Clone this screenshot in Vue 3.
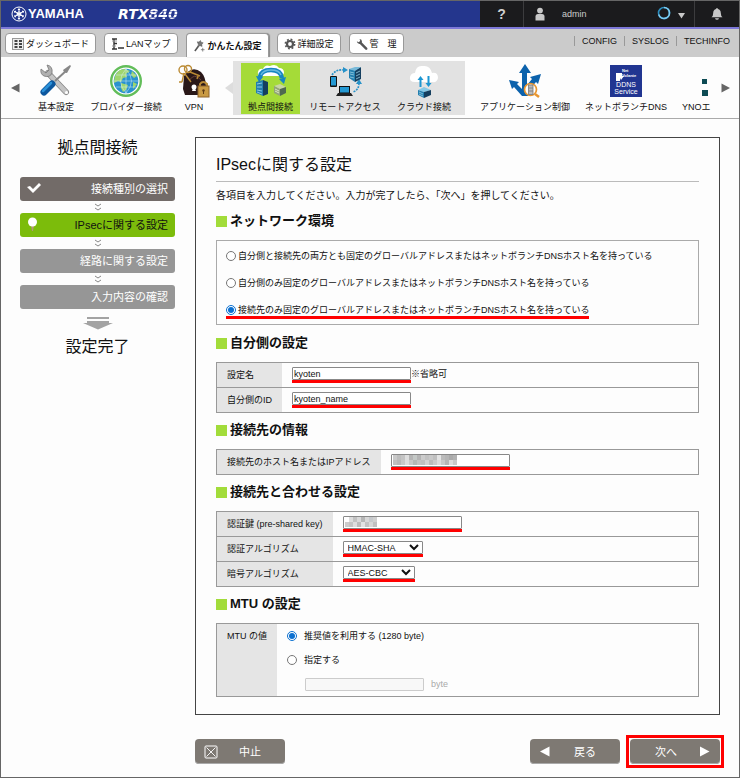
<template>
  <div class="page">
    <header>
      <div class="topbar">
        <a href="#" class="brand">
          <svg class="brand-mark" viewBox="0 0 16 16" aria-hidden="true">
            <circle cx="8" cy="8" r="7" fill="none" stroke="#fff" stroke-width="1" />
            <g stroke="#fff" stroke-width="1" fill="none">
              <path v-for="a in [0, 60, 120, 180, 240, 300]" :key="a" :transform="`rotate(${a} 8 8)`" d="M8 8V2.2M6.9 3.5H9.1M7 6.1L9 6.1" />
            </g>
          </svg>
          <span class="brand-name">YAMAHA</span>
        </a>
        <span class="model">RTX<span class="model-num">840</span></span>
        <div class="account">
          <button type="button" class="help" aria-label="ヘルプ">?</button>
          <div class="user">
            <svg class="user-icon" viewBox="0 0 12 14" aria-hidden="true">
              <circle cx="6" cy="3.6" r="2.9" fill="#c8c8c8" />
              <path d="M1.5 13.5V9.5Q1.5 7 4 7H8Q10.500 7 10.500 9.500V13.500Z" fill="#c8c8c8" />
            </svg>
            <span>admin</span>
            <button type="button" class="user-menu" aria-label="メニュー">
              <svg viewBox="0 0 30 14" aria-hidden="true">
                <circle cx="8" cy="6" r="5.500" fill="none" stroke="#2d8fc0" stroke-width="1.600" />
                <path d="M8 .5A5.500 5.500 0 1 1 2.700 7.500" fill="none" stroke="#7ecbf0" stroke-width="1.600" />
                <path d="M22 6H29L25.500 11.500Z" fill="#c8c8c8" />
              </svg>
            </button>
          </div>
          <button type="button" class="bell" aria-label="通知">
            <svg viewBox="0 0 12 14" aria-hidden="true">
              <path d="M6 1Q6.800 1 6.900 2Q9.800 2.800 9.800 6Q9.800 9 11.500 10.300H.5Q2.200 9 2.200 6Q2.200 2.800 5.100 2Q5.200 1 6 1Z" fill="#c8c8c8" />
              <path d="M4 11.200H8Q7.600 12.800 6 12.800T4 11.200Z" fill="#c8c8c8" />
            </svg>
          </button>
        </div>
      </div>

      <div class="tabbar">
        <nav class="tabs">
          <a v-for="t in tabs" :key="t.id" href="#" class="tab" :class="{ active: t.active }">
            <svg v-if="t.id === 'dash'" viewBox="0 0 12 12" aria-hidden="true">
              <rect x=".5" y=".5" width="11" height="11" fill="#eee" stroke="#999" />
              <path d="M2.500 3H5.500M2.500 6H5.500M2.500 9H5.500M7 3H10M7 6H10M7 9H10" stroke="#444" stroke-width="2" />
            </svg>
            <svg v-else-if="t.id === 'lan'" class="wide" viewBox="0 0 13 12" aria-hidden="true">
              <path d="M1 1H6M3 1V11M3 5.500H6M1 11H6M7 10H13" stroke="#333" stroke-width="1.400" fill="none" />
              <path d="M1 3H6M1 8H5" stroke="#999" />
            </svg>
            <svg v-else-if="t.id === 'easy'" class="wide" viewBox="0 0 13 13" aria-hidden="true">
              <path d="M1.500 12L5.500 6.500" stroke="#555" stroke-width="1.700" />
              <path d="M4 2L6 2.200L7.500 .5L8.300 2.500L10.500 3L9 4.800L9.300 7L7.200 6.200L5 7L5.200 4.600Z" fill="#777" stroke="#555" stroke-width=".5" />
              <path d="M10 8.500V12.500M8 10.500H12" stroke="#666" stroke-width=".8" />
            </svg>
            <svg v-else-if="t.id === 'detail'" viewBox="0 0 12 12" aria-hidden="true">
              <circle cx="6" cy="6" r="3" fill="none" stroke="#555" stroke-width="2.200" />
              <circle cx="6" cy="6" r="4.700" fill="none" stroke="#555" stroke-width="1.500" stroke-dasharray="1.850 1.841" />
            </svg>
            <svg v-else viewBox="0 0 12 12" aria-hidden="true">
              <path d="M10.200 10.700L4.500 4.800" stroke="#555" stroke-width="2.400" stroke-linecap="round" />
              <path d="M3.600 1Q6 1.200 6 3.800Q5.600 6 3.400 5.900Q1 5.500 .8 3.300L2.700 4.200L4.200 3.100Z" fill="#555" />
            </svg>
            <span>{{ t.label }}</span>
          </a>
        </nav>
        <nav class="logs">
          <a v-for="l in ['CONFIG', 'SYSLOG', 'TECHINFO']" :key="l" href="#">{{ l }}</a>
        </nav>
      </div>

      <nav class="launcher">
        <button type="button" class="scroll" aria-label="前へ">
          <svg viewBox="0 0 9 10" aria-hidden="true"><path d="M0 5L8.500 .5V9.500Z" fill="#666" /></svg>
        </button>
        <a href="#" class="item basic">
          <svg viewBox="0 0 34 34" aria-hidden="true">
            <path d="M9 9L27 28" stroke="#888" stroke-width="6" stroke-linecap="round" />
            <path d="M9 9L27 28" stroke="#c4c4c4" stroke-width="4.400" stroke-linecap="round" />
            <path d="M2 5L7 9L10 6L8 1Q14 2 13 9Q11 14 5 12Q1 10 2 5Z" fill="#b0b0b0" stroke="#777" stroke-width=".8" />
            <circle cx="27.500" cy="28.500" r="1.500" fill="#fff" />
            <path d="M16 17L28 6" stroke="#888" stroke-width="2" />
            <path d="M24 6L31 1L32 2L28 9Q25 9 24 6Z" fill="#888" />
            <path d="M5 28L13 20" stroke="#0c579e" stroke-width="7" stroke-linecap="round" />
            <path d="M4 27L12 19" stroke="#2b91d8" stroke-width="2.500" stroke-linecap="round" />
          </svg>
          <span>基本設定</span>
        </a>
        <a href="#" class="item provider">
          <svg viewBox="0 0 34 34" aria-hidden="true">
            <circle cx="17" cy="17" r="14.800" fill="#fff" stroke="#62bd59" stroke-width="2.400" />
            <circle cx="17" cy="17" r="12.300" fill="#2992cf" />
            <path d="M7 10Q10 5 16 5L21 7L17 10L18 13L14 14L12 18L9 17L5 19Q5 13 7 10ZM23 7L28 12L25 14L22 11ZM12 19L19 21L17 26L14 28L12 24ZM24 18L28 20L24 25Z" fill="#9fd66d" />
            <path d="M5 17H29M7 11H27M7 23H27M17 5V29M17 5Q6 17 17 29Q28 17 17 5" stroke="#d4edf7" stroke-width=".5" fill="none" />
          </svg>
          <span>プロバイダー接続</span>
        </a>
        <a href="#" class="item vpn">
          <svg viewBox="0 0 34 34" aria-hidden="true">
            <path d="M8 31L6 25L7 12Q15 1 24 8Q29 13 29 23L28 31Z" fill="#291818" />
            <path d="M12 17Q17 8 24 16" stroke="#694138" stroke-width="1" fill="none" />
            <circle cx="17" cy="23" r="2.500" fill="#fff" /><path d="M15 27L16 24H18L19 27Z" fill="#fff" />
            <g stroke="#ba8a33" stroke-width="1.400" fill="none">
              <circle cx="6" cy="6" r="4" /><circle cx="11" cy="5" r="3.500" />
              <path d="M7 9L5 18M5 18H2M13 8L23 12M21 12L20 15M8 10L14 18" />
            </g>
            <path d="M23 23V20Q26 16 30 20V23" fill="none" stroke="#b98b37" stroke-width="2" />
            <rect x="21" y="22" width="11" height="11" fill="#c99a43" stroke="#8e632a" />
            <circle cx="26.500" cy="26.500" r="1.200" fill="#5e3b17" /><path d="M26.500 26V30" stroke="#5e3b17" />
          </svg>
          <span>VPN</span>
        </a>
        <div class="notch" aria-hidden="true">
          <svg viewBox="0 0 8 12"><path d="M0 6L8 0V12Z" fill="#ddd" /></svg>
        </div>
        <div class="group">
          <a href="#" class="item site active">
            <svg viewBox="0 0 34 34" aria-hidden="true">
              <path d="M8 12Q3 12 4 8Q5 4 9 5Q11 0 16 2Q22-1 25 4Q30 4 30 9Q29 12 25 12Z" fill="#fff" />
              <path d="M6 13Q7 6 17 6Q27 6 28 14" fill="none" stroke="#1685c2" stroke-width="4.500" />
              <path d="M7 11Q9 6 17 6Q25 6 27 11" fill="none" stroke="#66b8df" stroke-width="1.500" />
              <path d="M2 12L9 13L5 18ZM25 15L32 13L30 20Z" fill="#1685c2" />
              <path d="M2 18L9 16V32L2 29Z" fill="#247faf" /><path d="M9 16L14 18V30L9 32Z" fill="#153f5f" />
              <path d="M3 20L8 19M3 23L8 23M3 26L8 27M3 28L8 30" stroke="#8bc8e4" />
              <path d="M20 22L26 20L32 23L26 26Z" fill="#c7d6a4" /><path d="M20 22L26 25V32L20 29Z" fill="#92a578" /><path d="M26 25L32 23V29L26 32Z" fill="#4f6950" />
              <path d="M21 25L25 27M21 27L25 29" stroke="#dbe5c3" />
            </svg>
            <span>拠点間接続</span>
          </a>
          <a href="#" class="item remote">
            <svg viewBox="0 0 34 34" aria-hidden="true">
              <path d="M4 11Q8 5 16 6M31 19Q31 26 25 28" fill="none" stroke="#2792c9" stroke-width="1.600" stroke-dasharray="2 1" />
              <path d="M15 3L20 6L15 9ZM28 20L31 15L34 20Z" fill="#2792c9" />
              <rect x="2" y="12" width="7" height="11" rx="1" fill="#111" /><rect x="3" y="13" width="5" height="8.500" fill="#2498d2" />
              <path d="M21 5L27 6V18L21 14Z" fill="#247faf" /><path d="M27 6L33 3V15L27 18Z" fill="#153f5f" /><path d="M21 5L27 3L33 3L27 7Z" fill="#79bad9" />
              <path d="M22 8L26 9M22 10L26 11M22 13L26 14M28 9L32 7M28 12L32 10M28 15L32 13" stroke="#9bcfe5" stroke-width=".8" />
              <rect x="11" y="22" width="11" height="7" fill="#111" /><rect x="12" y="23" width="9" height="5.500" fill="#2498d2" />
              <path d="M10 29H23L25 32H8Z" fill="#222" />
            </svg>
            <span>リモートアクセス</span>
          </a>
          <a href="#" class="item cloud">
            <svg viewBox="0 0 34 34" aria-hidden="true">
              <path d="M8 18Q2 18 3 13Q4 9 8 9Q9 1 16 2Q23 1 25 9Q31 8 31 14Q30 19 25 18Z" fill="#fff" />
              <path d="M13.500 23V15M21.500 12V20" stroke="#1c96d2" stroke-width="2" />
              <path d="M10.500 16L13.500 12L16.500 16ZM18.500 19L21.500 23L24.500 19Z" fill="#1c96d2" />
              <path d="M11 26L17 23L24 26L17 28Z" fill="#85c9e7" /><path d="M11 26L17 28V34L11 31Z" fill="#247faf" /><path d="M17 28L24 26V31L17 34Z" fill="#153f5f" />
              <path d="M12 28L16 30M12 30L16 32" stroke="#9bcfe5" stroke-width=".8" />
            </svg>
            <span>クラウド接続</span>
          </a>
        </div>
        <a href="#" class="item app">
          <svg viewBox="0 0 34 34" aria-hidden="true">
            <path d="M14 32V9H11L17 0L23 9H19V21L24 15L22 13L33 10L30 20L28 18L20 27V32Z" fill="#0c62ac" />
            <path d="M14 32L6 23L4 25L1 16L11 18L9 20L14 25Z" fill="#0c62ac" />
            <circle cx="22.500" cy="25.500" r="6" fill="#fff" stroke="#e9962f" stroke-width="1.700" />
            <path d="M27 30L31 33" stroke="#e9962f" stroke-width="2.500" />
            <rect x="20.500" y="21" width="4.500" height="9.500" fill="#bbb" stroke="#777" stroke-width=".8" />
            <path d="M21 24H25M21 27H25" stroke="#777" stroke-width=".8" />
          </svg>
          <span>アプリケーション制御</span>
        </a>
        <a href="#" class="item ddns">
          <span class="ddns-badge">
            <svg viewBox="0 0 22 13" aria-hidden="true">
              <path d="M1 5H7V8H9L6 12L5 10V13H1Z" fill="#fff" />
            </svg>
            <i>Net<br>Volante</i>
            <b>DDNS<br>Service</b>
          </span>
          <span>ネットボランチDNS</span>
        </a>
        <a href="#" class="item yno">
          <svg viewBox="0 0 34 34" aria-hidden="true">
            <path d="M20 15H25V20H20ZM20 26H26V32H20Z" fill="#0d4b54" />
          </svg>
          <span>YNOエ</span>
        </a>
        <button type="button" class="scroll next" aria-label="次へ">
          <svg viewBox="0 0 9 10" aria-hidden="true"><path d="M.5 .5L9 5L.5 9.500Z" fill="#666" /></svg>
        </button>
      </nav>
    </header>

    <div class="body">
      <aside class="side">
        <p class="side-title">拠点間接続</p>
        <ol class="steps">
          <li v-for="(s, i) in steps" :key="s.label">
            <div class="step" :class="s.state">
              <svg v-if="s.state === 'done'" viewBox="0 0 16 16" aria-hidden="true">
                <path d="M1 6L4 5L7 8L13 2L15 4L7 12Z" fill="#fff" />
              </svg>
              <svg v-else-if="s.state === 'current'" viewBox="0 0 16 16" aria-hidden="true">
                <path d="M5.500 8L6.500 14L7.500 8Z" fill="#b5967b" stroke="#b5967b" /><circle cx="6.500" cy="5" r="4.500" fill="#fff" />
              </svg>
              <span>{{ s.label }}</span>
            </div>
            <svg v-if="i < steps.length - 1" class="chev" viewBox="0 0 8 8" aria-hidden="true">
              <path d="M1 1L4 3L7 1M1 5L4 7L7 5" fill="none" stroke="#888" stroke-width="1" />
            </svg>
          </li>
        </ol>
        <svg class="finish-arrow" viewBox="0 0 30 13" aria-hidden="true">
          <path d="M4 0H26V2H4ZM4 4H26V6H30L15 12.500L0 6H4Z" fill="#a3a3a3" />
        </svg>
        <p class="side-title">設定完了</p>
      </aside>

      <form class="content" @submit.prevent>
        <main class="panel">
          <h1>IPsecに関する設定</h1>
          <p class="intro">各項目を入力してください。入力が完了したら、「次へ」を押してください。</p>

          <h2>ネットワーク環境</h2>
          <div class="choices">
            <div v-for="n in networks" :key="n.id" class="choice">
              <label :class="{ marked: network === n.id }">
                <input v-model="network" type="radio" name="network" :value="n.id">
                <span>{{ n.label }}</span>
              </label>
            </div>
          </div>

          <h2>自分側の設定</h2>
          <table>
            <tbody>
              <tr>
                <th scope="row" class="w-own"><label for="name">設定名</label></th>
                <td><span class="mark"><input id="name" v-model="name" type="text"></span>※省略可</td>
              </tr>
              <tr>
                <th scope="row"><label for="own-id">自分側のID</label></th>
                <td><span class="mark"><input id="own-id" v-model="ownId" type="text"></span></td>
              </tr>
            </tbody>
          </table>

          <h2>接続先の情報</h2>
          <table>
            <tbody>
              <tr>
                <th scope="row" class="w-host"><label for="host">接続先のホスト名またはIPアドレス</label></th>
                <td>
                  <span class="mark">
                    <input id="host" type="text">
                    <svg class="mosaic" width="64" height="10" viewBox="0 0 64 10" aria-hidden="true">
                      <rect v-for="(c, i) in hostMosaic" :key="i" :x="(i % 16) * 4" :y="Math.floor(i / 16) * 5" width="4" height="5" :fill="c" />
                    </svg>
                  </span>
                </td>
              </tr>
            </tbody>
          </table>

          <h2>接続先と合わせる設定</h2>
          <table>
            <tbody>
              <tr>
                <th scope="row" class="w-auth"><label for="psk">認証鍵 (pre-shared key)</label></th>
                <td>
                  <span class="mark">
                    <input id="psk" type="text">
                    <svg class="mosaic" width="32" height="10" viewBox="0 0 32 10" aria-hidden="true">
                      <rect v-for="(c, i) in keyMosaic" :key="i" :x="(i % 8) * 4" :y="Math.floor(i / 8) * 5" width="4" height="5" :fill="c" />
                    </svg>
                  </span>
                </td>
              </tr>
              <tr>
                <th scope="row"><label for="auth">認証アルゴリズム</label></th>
                <td><span class="mark"><select id="auth" class="sel-auth"><option>HMAC-SHA</option></select></span></td>
              </tr>
              <tr>
                <th scope="row"><label for="enc">暗号アルゴリズム</label></th>
                <td><span class="mark"><select id="enc" class="sel-enc"><option>AES-CBC</option></select></span></td>
              </tr>
            </tbody>
          </table>

          <h2>MTU の設定</h2>
          <table>
            <tbody>
              <tr>
                <th scope="row" class="w-mtu">MTU の値</th>
                <td class="mtu">
                  <label><input v-model="mtu" type="radio" name="mtu" value="auto"><span>推奨値を利用する (1280 byte)</span></label>
                  <label><input v-model="mtu" type="radio" name="mtu" value="manual"><span>指定する</span></label>
                  <div class="mtu-size"><input id="mtu-size" type="text" :disabled="mtu === 'auto'"><label for="mtu-size">byte</label></div>
                </td>
              </tr>
            </tbody>
          </table>
        </main>

        <div class="actions">
          <button type="button" class="btn">
            <svg viewBox="0 0 14 14" aria-hidden="true">
              <rect x="1" y="1" width="12" height="12" rx="1" fill="none" stroke="#fff" /><path d="M2.500 2.500L11.500 11.500M11.500 2.500L2.500 11.500" stroke="#fff" stroke-width=".9" />
            </svg>
            <span>中止</span>
          </button>
          <button type="button" class="btn back">
            <svg viewBox="0 0 14 14" aria-hidden="true"><path d="M1 6.500L10.500 1.500V11.500Z" fill="#fff" /></svg>
            <span>戻る</span>
          </button>
          <div class="next-frame">
            <button type="submit" class="btn next-btn">
              <span>次へ</span>
              <svg viewBox="0 0 14 14" aria-hidden="true"><path d="M12.500 6.500L3 1.500V11.500Z" fill="#fff" /></svg>
            </button>
          </div>
        </div>
      </form>
    </div>
  </div>
</template>

<script setup>
import { ref } from 'vue'

const tabs = [
  { id: 'dash', label: 'ダッシュボード' },
  { id: 'lan', label: 'LANマップ' },
  { id: 'easy', label: 'かんたん設定', active: true },
  { id: 'detail', label: '詳細設定' },
  { id: 'admin', label: '管　理' }
]

const steps = [
  { label: '接続種別の選択', state: 'done' },
  { label: 'IPsecに関する設定', state: 'current' },
  { label: '経路に関する設定', state: 'todo' },
  { label: '入力内容の確認', state: 'todo' }
]

const networks = [
  { id: 'both', label: '自分側と接続先の両方とも固定のグローバルアドレスまたはネットボランチDNSホスト名を持っている' },
  { id: 'own', label: '自分側のみ固定のグローバルアドレスまたはネットボランチDNSホスト名を持っている' },
  { id: 'peer', label: '接続先のみ固定のグローバルアドレスまたはネットボランチDNSホスト名を持っている' }
]

const network = ref('peer')
const name = ref('kyoten')
const ownId = ref('kyoten_name')
const mtu = ref('auto')

// 伏せ字モザイクの色（左上から行順）
const hostMosaic = [
  '#c9c9c9', '#bdbdbd', '#c4c4c4', '#dedede', '#b5b5b5', '#c4c8c6', '#b4b4b4', '#ccc', '#c2c2c2', '#c9c9c9', '#c0c0c0', '#e4e4e4', '#bbb', '#b5b5b5', '#aaa', '#b2b2b2',
  '#c0c0c0', '#b8b8b8', '#c8c8c8', '#ddd', '#c8c8c8', '#b4b8b6', '#c3c3c3', '#bfbfbf', '#d2d2d2', '#bcbcbc', '#cbcbcb', '#ddd', '#c8c8c8', '#b5b5b5', '#ddd', '#c9c9c9'
]
const keyMosaic = [
  '#fff', '#ddd', '#c2c2c2', '#d9d9d9', '#b6b6b6', '#d8d8d8', '#c6c9cc', '#d0d0d0',
  '#ccc', '#c4c4c4', '#dedede', '#bcbcbc', '#e2e2e2', '#c2c2c2', '#d7d7d7', '#c0c0c0'
]
</script>

<style>
body {
  background: #fdfdfd;
}
</style>

<style scoped>
.page {
  box-sizing: border-box;
  border: 1px solid #666;
  background: #fdfdfd;
  color: #111;
  font: 9px/12px "Liberation Sans", "Noto Sans CJK JP", sans-serif;
}
a {
  color: inherit;
  text-decoration: none;
}
button,
input,
select {
  font: inherit;
  color: inherit;
  margin: 0;
}
svg {
  display: block;
  flex: none;
}

/* ===== 上部バー ===== */
.topbar {
  display: flex;
  align-items: center;
  height: 26px;
  background: #24368d;
  border-bottom: 2px solid #7d78d8;
  color: #fff;
}
.brand {
  display: flex;
  align-items: center;
  gap: 1px;
  width: 117px;
  padding-left: 10px;
  box-sizing: border-box;
}
.brand-mark {
  width: 16px;
  height: 16px;
}
.brand-name {
  font: bold 13px/20px "Liberation Sans", sans-serif;
}
.model {
  font: italic bold 14px/20px "DejaVu Sans", sans-serif;
}
.model-num {
  background: repeating-linear-gradient(180deg, #fff 0 2px, #8d97cc 2px 3px);
  background-clip: text;
  color: transparent;
}
.account {
  display: flex;
  align-self: stretch;
  width: 259px;
  margin-left: auto;
  background: #1b1b1d;
}
.account button {
  display: flex;
  align-items: center;
  justify-content: center;
  padding: 0;
  border: 0;
  background: none;
}
.account .help {
  width: 44px;
  border-right: 1px solid #3c3c3e;
  color: #d0d0d0;
  font: bold 14px/20px "Liberation Sans", sans-serif;
}
.user {
  display: flex;
  flex: 1;
  align-items: center;
  padding: 0 8px 0 10px;
  border-right: 1px solid #3c3c3e;
  color: #ccc;
}
.user-icon {
  width: 12px;
  height: 14px;
  margin-right: 16px;
}
.user-menu {
  margin-left: auto;
}
.user-menu svg {
  width: 30px;
  height: 14px;
  overflow: visible;
}
.bell {
  width: 44px;
}
.bell svg {
  width: 12px;
  height: 14px;
}

/* ===== タブ ===== */
.tabbar {
  display: flex;
  justify-content: space-between;
  height: 28px;
  background: #cbcbcb;
}
.tabs {
  display: flex;
  align-items: flex-start;
  gap: 8px;
  padding: 4px 0 0 4px;
}
.tab {
  display: flex;
  align-items: center;
  gap: 2px;
  box-sizing: border-box;
  height: 21px;
  padding: 0 6px;
  border: 1px solid #999;
  border-radius: 4px;
  background: #fff;
  white-space: nowrap;
}
.tab.active {
  height: 24px;
  border-bottom: 0;
  border-radius: 4px 4px 0 0;
  box-shadow: 1px 0 1px #888;
  font-weight: bold;
}
.tab svg {
  width: 12px;
  height: 12px;
}
.tab svg.wide {
  width: 13px;
}
.logs {
  display: flex;
  align-items: center;
  padding: 0 9px 4px 0;
}
.logs a {
  padding: 0 7px;
  border-left: 1px solid #999;
  line-height: 10px;
}
.logs a:last-child {
  padding-right: 0;
}

/* ===== アイコンメニュー ===== */
.launcher {
  display: flex;
  align-items: stretch;
  box-sizing: border-box;
  height: 62px;
  padding: 4px 0 3px;
  border-bottom: 1px solid #aaa;
  background: #fdfdfd;
}
.scroll {
  display: flex;
  align-items: center;
  justify-content: center;
  flex: none;
  width: 28px;
  padding: 0;
  border: 0;
  background: none;
}
.scroll svg {
  width: 9px;
  height: 10px;
}
.item {
  display: flex;
  flex: none;
  flex-direction: column;
  align-items: center;
  gap: 3px;
  box-sizing: border-box;
  height: 51px;
  margin-top: 2px;
  padding-top: 1px;
  white-space: nowrap;
}
.item > svg {
  width: 34px;
  height: 34px;
}
.basic {
  width: 54px;
}
.provider {
  width: 86px;
}
.vpn {
  width: 50px;
}
.notch {
  display: flex;
  flex: none;
  align-items: center;
  justify-content: flex-end;
  width: 14px;
}
.notch svg {
  width: 8px;
  height: 12px;
}
.group {
  display: flex;
  flex: none;
  padding: 0 7px 0 8px;
  background: #e2e2e2;
}
.site {
  width: 59px;
}
.site.active {
  background: #a5db38;
}
.remote {
  width: 90px;
}
.cloud {
  width: 68px;
}
.app {
  width: 120px;
}
.ddns {
  width: 82px;
}
.ddns-badge {
  position: relative;
  box-sizing: border-box;
  width: 32px;
  height: 32px;
  margin: 1px 0;
  padding-top: 16px;
  background: #213591;
  color: #fff;
  text-align: center;
}
.ddns-badge svg {
  position: absolute;
  top: 3px;
  left: 5px;
  width: 22px;
  height: 13px;
}
.ddns-badge i {
  position: absolute;
  top: 3px;
  left: 12px;
  font: bold 4px/5px "Liberation Sans", sans-serif;
  text-align: left;
}
.ddns-badge b {
  display: block;
  font: 7px/7px "Liberation Sans", sans-serif;
}
.yno {
  flex: 1;
  align-items: flex-start;
  min-width: 0;
  margin-left: 15px;
}
.scroll.next {
  width: 28px;
}

/* ===== 手順 ===== */
.body {
  display: flex;
  padding: 0 19px 9px 0;
}
.side {
  box-sizing: border-box;
  flex: none;
  width: 194px;
  padding: 17px 20px 0 19px;
}
.side-title {
  margin: 0;
  font-size: 16px;
  line-height: 24px;
  text-align: center;
}
.steps {
  margin: 17px 0 0;
  padding: 0;
  list-style: none;
}
.step {
  display: flex;
  align-items: center;
  justify-content: space-between;
  height: 24px;
  padding: 0 7px 0 6px;
  border-radius: 3px;
  background: #969696;
  color: #fff;
  font-size: 11px;
}
.step svg {
  width: 16px;
  height: 16px;
}
.step span {
  margin-left: auto;
}
.step.done {
  background: #726b68;
}
.step.current {
  background: #7cbc0b;
  color: #111;
}
.chev {
  width: 8px;
  height: 8px;
  margin: 2px auto;
}
.finish-arrow {
  width: 30px;
  height: 13px;
  margin: 8px auto 5px;
}

/* ===== 設定パネル ===== */
.content {
  flex: 1;
  min-width: 0;
  padding-top: 18px;
}
.panel {
  display: block;
  padding: 15px 20px 17px;
  border: 1px solid #444;
}
h1 {
  margin: 0;
  padding-bottom: 4px;
  border-bottom: 1px solid #bbb;
  font-size: 16px;
  font-weight: normal;
  line-height: 24px;
}
.intro {
  margin: 6px 0 0;
  font-size: 10px;
  line-height: 16px;
}
h2 {
  display: flex;
  align-items: center;
  gap: 3px;
  margin: 8px 0 10px;
  font-size: 13px;
  line-height: 18px;
}
h2::before {
  content: "";
  width: 11px;
  height: 11px;
  background: #a2dc3a;
}
.choices {
  margin-bottom: 9px;
  padding: 1px 9px;
  border: 1px solid #aaa;
}
.choice {
  display: flex;
  align-items: center;
  height: 27px;
}
.choice label {
  display: flex;
  align-items: center;
  gap: 2px;
  padding-top: 3px;
  border-bottom: 3px solid transparent;
}
.choice label.marked {
  border-bottom-color: #f00;
}
input[type="radio"] {
  flex: none;
  width: 10px;
  height: 10px;
  accent-color: #0b70d0;
}
table {
  width: 100%;
  border-collapse: collapse;
  border: 1px solid #999;
}
th,
td {
  box-sizing: border-box;
  height: 25px;
  padding: 0 10px;
  border-top: 1px solid #999;
  border-bottom: 1px solid #999;
  text-align: left;
}
th {
  background: #e5e5e5;
  font-weight: normal;
  white-space: nowrap;
}
.w-own {
  width: 65px;
}
.w-host {
  width: 163px;
}
.w-auth {
  width: 115px;
}
.w-mtu {
  width: 60px;
  padding-top: 6px;
  vertical-align: top;
}
.mark {
  position: relative;
  display: inline-block;
  border-bottom: 3px solid #f00;
  vertical-align: middle;
}
.mosaic {
  position: absolute;
  top: 1px;
  left: 2px;
}
input[type="text"],
select {
  display: block;
  box-sizing: border-box;
  width: 119px;
  height: 13px;
  padding: 0 1px;
  border: 1px solid #888;
  border-radius: 1px;
  background: #fff;
}
select {
  padding: 0;
}
.sel-auth {
  width: 80px;
}
.sel-enc {
  width: 72px;
}
.mtu {
  height: 73px;
}
.mtu > label {
  display: flex;
  align-items: center;
  gap: 7px;
  height: 24px;
}
.mtu-size {
  display: flex;
  align-items: center;
  gap: 7px;
  height: 24px;
  padding-left: 18px;
  color: #aaa;
}
input[type="text"]:disabled {
  border-color: #ccc;
  background: #f8f8f8;
}

/* ===== ボタン ===== */
.actions {
  display: flex;
  align-items: center;
  gap: 6px;
  margin: 20px -4px 0 0;
}
.btn {
  display: flex;
  align-items: center;
  justify-content: space-between;
  width: 90px;
  height: 25px;
  padding: 0 24px 0 9px;
  border: 0;
  border-radius: 4px;
  background: #7e7973;
  box-shadow: inset 0 -1px #aaa;
  color: #fff;
  font-size: 11px;
}
.btn svg {
  width: 14px;
  height: 14px;
}
.btn.back {
  margin-left: auto;
}
.next-frame {
  padding: 1px;
  border: 3px solid #f00;
}
.btn.next-btn {
  padding: 0 9px 0 25px;
}
</style>
